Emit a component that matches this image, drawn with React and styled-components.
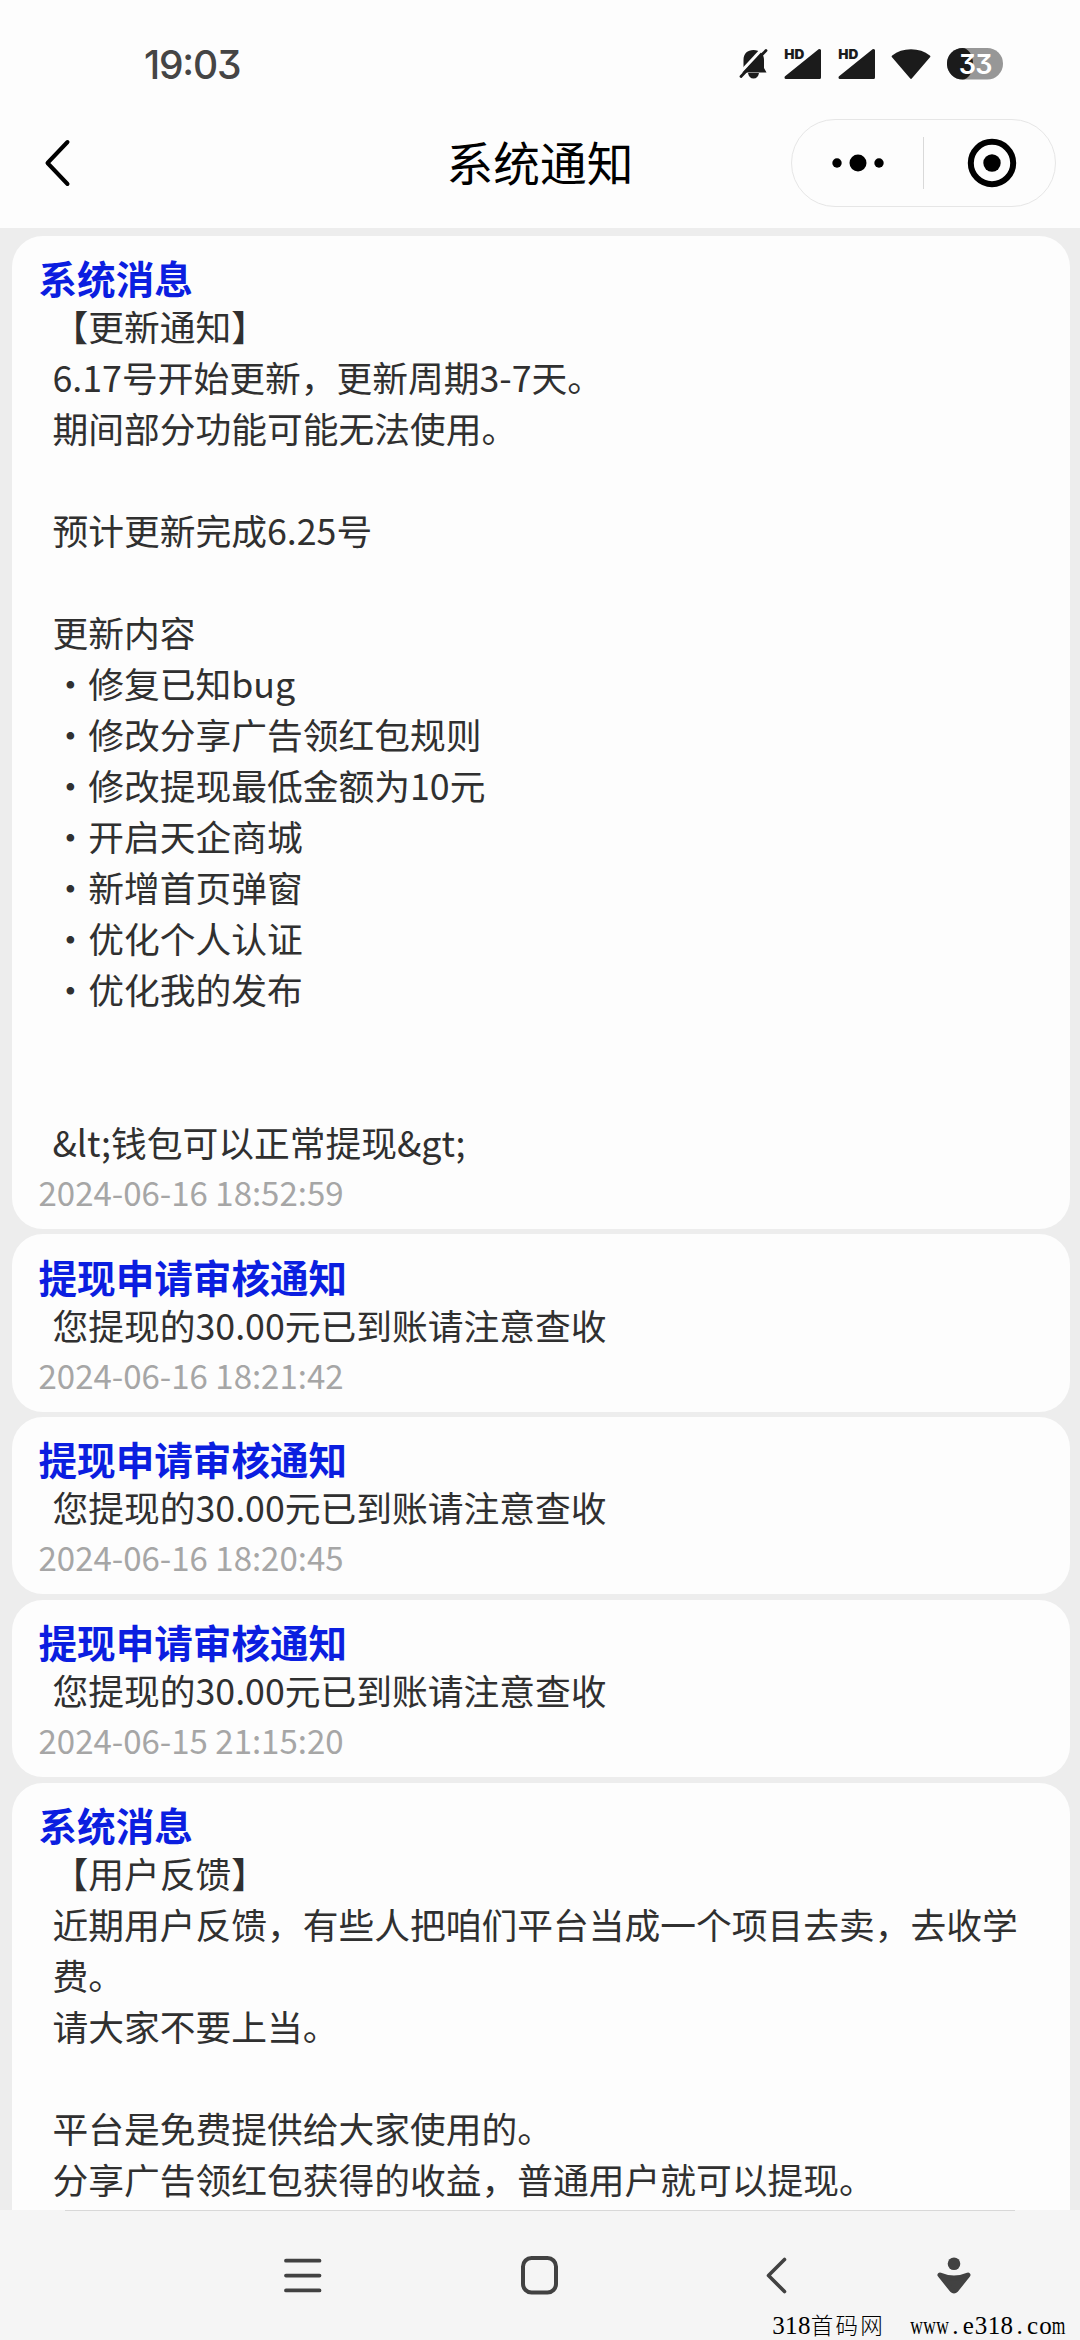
import React from 'react';
import styled, { createGlobalStyle } from 'styled-components';

const Global = createGlobalStyle`
  * { box-sizing: border-box; }
  html, body { margin: 0; padding: 0; background: #ededed; }
`;

const sans = `"Noto Sans CJK SC", "Noto Sans", sans-serif`;

const Screen = styled.div`
  width: 1080px;
  height: 2340px;
  display: flex;
  flex-direction: column;
  overflow: hidden;
  background: #ededed;
  font-family: ${sans};
`;

const Top = styled.header`
  flex: none;
  height: 228px;
  background: #fdfdfd;
`;

const StatusBar = styled.div`
  height: 98px;
  padding: 30px 77.5px 0 144px;
  display: flex;
  justify-content: space-between;
  align-items: flex-start;
`;

const Clock = styled.div`
  height: 68px;
  line-height: 70px;
  font-family: Inter, "Liberation Sans", sans-serif;
  font-feature-settings: "cv09" 1, "calt" 1;
  font-size: 39px;
  font-weight: 500;
  letter-spacing: -1.2px;
  color: #454545;
`;

const StatusIcons = styled.div`
  display: flex;
  padding-top: 18px;
  svg { display: block; }
`;

const Slot = styled.div`
  width: ${(p) => p.$w}px;
  margin-left: ${(p) => p.$gap || 0}px;
`;

const TitleBar = styled.div`
  height: 130px;
  display: grid;
  grid-template-columns: 336px 1fr 336px;
  align-items: center;
`;

const BackSlot = styled.div`
  padding-left: 43px;
  svg { display: block; }
`;

const PageTitle = styled.h1`
  margin: 0;
  padding-bottom: 4px;
  text-align: center;
  font-size: 46.7px;
  font-weight: 400;
  line-height: 60px;
  color: #000;
  white-space: nowrap;
`;

const Capsule = styled.div`
  justify-self: end;
  margin-right: 24px;
  width: 265px;
  height: 88px;
  border: 1px solid #e6e6e6;
  border-radius: 44px;
  display: flex;
  align-items: center;
`;

const CapsuleButton = styled.div`
  flex: none;
  width: 131px;
  display: flex;
  justify-content: center;
  padding-left: ${(p) => p.$shift || 0}px;
  svg { display: block; }
`;

const CapsuleLine = styled.div`
  width: 1px;
  height: 52px;
  background: #d9d9d9;
`;

const List = styled.main`
  flex: 1;
  min-height: 0;
  overflow: hidden;
  padding: 8px 10.5px 0 11.5px;
  display: flex;
  flex-direction: column;
  gap: 5.4px;
`;

const Card = styled.article`
  flex: none;
  padding: 18.4px 27px 12.5px;
  border-radius: 31px;
  background: #fdfdfd;

  &:last-child {
    padding-bottom: 60px;
  }
`;

const CardTitle = styled.h2`
  margin: 0;
  height: 47px;
  line-height: 46px;
  font-size: 38.6px;
  font-weight: 700;
  color: #0b1ee0;
`;

const CardBody = styled.p`
  margin: 0;
  padding-left: 14px;
  font-size: 35.75px;
  line-height: 50.97px;
  color: #303030;
  white-space: pre-wrap;
`;

const CardTime = styled.time`
  display: block;
  height: 48.5px;
  line-height: 48.5px;
  font-size: 33px;
  color: #a6a6a6;
`;

const NavBar = styled.nav`
  flex: none;
  height: 130px;
  background: #f5f5f5;
  display: flex;
  flex-direction: column;
`;

const NavRule = styled.div`
  height: 1px;
  margin: 0 65px;
  background: #d8d8d8;
`;

const NavIcons = styled.div`
  height: 101px;
  padding: 40px 0 0 279px;
  display: flex;
  svg { display: block; }
`;

const Watermark = styled.div`
  height: 28px;
  padding-left: 772px;
  display: flex;
  line-height: 28px;
  font-size: 25px;
  color: #000;
  font-family: "Liberation Serif", "Noto Sans CJK SC", serif;
`;

const MarkHan = styled.span`
  width: 75px;
  margin-right: 24.5px;
  line-height: 25px;
  font-family: "Noto Sans CJK SC", sans-serif;
  font-weight: 300;
  font-size: 22.5px;
  letter-spacing: 2.3px;
`;

const Cell = styled.span`
  width: 12.9px;
  display: flex;
  justify-content: center;
  transform: scaleX(${(p) => (p.$wide ? 0.7 : 1)});
`;

const Cells = ({ text }) =>
  [...text].map((c, i) => (
    <Cell key={i} $wide={c === 'w' || c === 'm'}>{c}</Cell>
  ));

const HdText = styled.text`
  font-family: Inter, sans-serif;
  font-weight: 900;
  font-size: 13px;
`;

const BatteryText = styled.text`
  font-family: Inter, sans-serif;
  font-weight: 600;
  font-size: 27px;
  font-feature-settings: "cv09" 1;
`;

const ink = '#1b1b1b';

const BellOff = () => (
  <svg width="30" height="31" viewBox="0 0 30 31">
    <path d="M4.5 22.5 V12 C4.5 5.5 8.5 2 14.5 2 C20.5 2 25 5.5 25 12 V20 L27.5 24.5 H2 Z" fill={ink} />
    <path d="M9 25 H20 C19.5 28.5 17.5 30.5 14.5 30.5 C11.5 30.5 9.5 28.5 9 25 Z" fill={ink} />
    <path d="M-1 27 L25 -1" stroke="#fdfdfd" strokeWidth="3" />
    <path d="M2 28.5 L27 2.5" stroke={ink} strokeWidth="2.8" strokeLinecap="round" />
  </svg>
);

const Signal = () => (
  <svg width="38" height="31" viewBox="0 0 38 31">
    <path d="M2 29.5 L35.5 2.5 V29.5 Z" fill={ink} stroke={ink} strokeWidth="3" strokeLinejoin="round" />
    <path d="M0 0 H20 V11.5 L14 16 H0 Z" fill="#fdfdfd" />
    <HdText x="0.3" y="11" textLength="20" lengthAdjust="spacingAndGlyphs" fill={ink}>HD</HdText>
  </svg>
);

const Wifi = () => (
  <svg width="40" height="31" viewBox="0 0 40 31">
    <path d="M2 8.5 C12 0.5 28 0.5 38 8.5 L20 29.5 Z" fill={ink} stroke={ink} strokeWidth="2.6" strokeLinejoin="round" />
  </svg>
);

const Battery = () => (
  <svg width="56" height="32" viewBox="0 0 56 32">
    <rect width="56" height="31.5" rx="15.75" fill="#979797" />
    <path d="M15.7 0 C21 0 26 7 26 15.7 C26 24.5 21 31.5 15.7 31.5 A15.75 15.75 0 0 1 15.7 0 Z" fill={ink} />
    <BatteryText x="11.8 28.3" y="25.5" fill="#fff">33</BatteryText>
  </svg>
);

const cards = [
  {
    title: '系统消息',
    body:
      '【更新通知】\n6.17号开始更新，更新周期3-7天。\n期间部分功能可能无法使用。\n\n预计更新完成6.25号\n\n更新内容\n・修复已知bug\n・修改分享广告领红包规则\n・修改提现最低金额为10元\n・开启天企商城\n・新增首页弹窗\n・优化个人认证\n・优化我的发布\n\n\n&lt;钱包可以正常提现&gt;',
    time: '2024-06-16 18:52:59',
  },
  { title: '提现申请审核通知', body: '您提现的30.00元已到账请注意查收', time: '2024-06-16 18:21:42' },
  { title: '提现申请审核通知', body: '您提现的30.00元已到账请注意查收', time: '2024-06-16 18:20:45' },
  { title: '提现申请审核通知', body: '您提现的30.00元已到账请注意查收', time: '2024-06-15 21:15:20' },
  {
    title: '系统消息',
    body:
      '【用户反馈】\n近期用户反馈，有些人把咱们平台当成一个项目去卖，去收学费。\n请大家不要上当。\n\n平台是免费提供给大家使用的。\n分享广告领红包获得的收益，普通用户就可以提现。',
  },
];

export default function App() {
  return (
    <Screen>
      <Global />
      <Top>
        <StatusBar>
          <Clock>19:03</Clock>
          <StatusIcons>
            <Slot $w={30}><BellOff /></Slot>
            <Slot $w={38} $gap={15}><Signal /></Slot>
            <Slot $w={38} $gap={16}><Signal /></Slot>
            <Slot $w={40} $gap={15}><Wifi /></Slot>
            <Slot $w={56} $gap={16}><Battery /></Slot>
          </StatusIcons>
        </StatusBar>
        <TitleBar>
          <BackSlot>
            <svg width="30" height="50" viewBox="0 0 30 50">
              <path d="M24.5 4 L4.5 25 L24.5 46" fill="none" stroke="#000" strokeWidth="4" strokeLinecap="round" strokeLinejoin="round" />
            </svg>
          </BackSlot>
          <PageTitle>系统通知</PageTitle>
          <Capsule>
            <CapsuleButton>
              <svg width="54" height="20" viewBox="0 0 54 20">
                <circle cx="6" cy="10" r="4.7" />
                <circle cx="27" cy="10" r="8.5" />
                <circle cx="48" cy="10" r="4.7" />
              </svg>
            </CapsuleButton>
            <CapsuleLine />
            <CapsuleButton $shift={4}>
              <svg width="50" height="50" viewBox="0 0 50 50">
                <circle cx="25" cy="25" r="21.2" fill="none" stroke="#000" strokeWidth="6" />
                <circle cx="25" cy="25" r="8.7" />
              </svg>
            </CapsuleButton>
          </Capsule>
        </TitleBar>
      </Top>
      <List>
        {cards.map((c, i) => (
          <Card key={i}>
            <CardTitle>{c.title}</CardTitle>
            <CardBody>{c.body}</CardBody>
            {c.time && <CardTime>{c.time}</CardTime>}
          </Card>
        ))}
      </List>
      <NavBar>
        <NavRule />
        <NavIcons>
          <Slot $w={48}>
            <svg width="48" height="48" viewBox="0 0 48 48">
              <path d="M7 9.7 H40.5 M7 24.6 H40.5 M7 39.4 H40.5" stroke="#424242" strokeWidth="3.8" strokeLinecap="round" />
            </svg>
          </Slot>
          <Slot $w={48} $gap={188}>
            <svg width="48" height="48" viewBox="0 0 48 48">
              <rect x="8" y="7" width="33" height="34.5" rx="8.5" fill="none" stroke="#424242" strokeWidth="4" />
            </svg>
          </Slot>
          <Slot $w={48} $gap={189}>
            <svg width="48" height="48" viewBox="0 0 48 48">
              <path d="M32.5 8.5 L16.5 24.5 L32.5 40.5" fill="none" stroke="#424242" strokeWidth="3.6" strokeLinecap="round" strokeLinejoin="round" />
            </svg>
          </Slot>
          <Slot $w={48} $gap={130}>
            <svg width="48" height="48" viewBox="0 0 48 48">
              <circle cx="24" cy="12.7" r="6.3" fill="#424242" />
              <path d="M10 24 Q24 30 38 24 L26 39 Q24 41 22 39 Z" fill="#424242" stroke="#424242" strokeWidth="5" strokeLinejoin="round" />
            </svg>
          </Slot>
        </NavIcons>
        <Watermark>
          <Cells text="318" />
          <MarkHan>首码网</MarkHan>
          <Cells text="www.e318.com" />
        </Watermark>
      </NavBar>
    </Screen>
  );
}
